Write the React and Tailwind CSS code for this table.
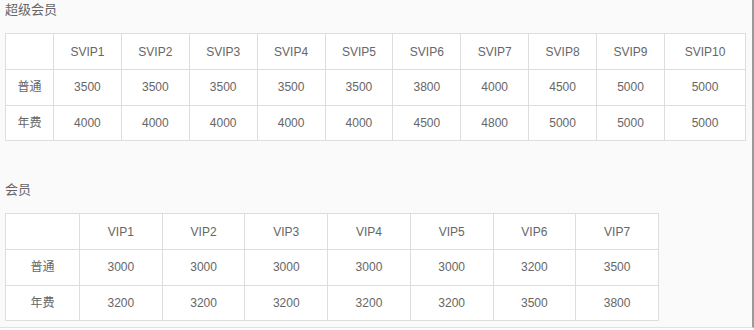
import React from "react";

const svip = {
    heads: ["SVIP1", "SVIP2", "SVIP3", "SVIP4", "SVIP5", "SVIP6", "SVIP7", "SVIP8", "SVIP9", "SVIP10"],
    rows: [
        ["普通", "3500", "3500", "3500", "3500", "3500", "3800", "4000", "4500", "5000", "5000"],
        ["年费", "4000", "4000", "4000", "4000", "4000", "4500", "4800", "5000", "5000", "5000"],
    ],
};

const vip = {
    heads: ["VIP1", "VIP2", "VIP3", "VIP4", "VIP5", "VIP6", "VIP7"],
    rows: [
        ["普通", "3000", "3000", "3000", "3000", "3000", "3200", "3500"],
        ["年费", "3200", "3200", "3200", "3200", "3200", "3500", "3800"],
    ],
};

const cell = "border border-[#dddddd] text-center align-middle p-0";

const PriceTable = ({ data, tableClass, firstCol, lastCol }) => (
    <table className={`table-fixed border-collapse bg-white ${tableClass}`}>
        <colgroup>
            <col className={firstCol} />
            {data.heads.map((h, i) => (
                <col key={h} className={i === data.heads.length - 1 ? lastCol : ""} />
            ))}
        </colgroup>
        <thead>
            <tr className="h-[36px]">
                <th className={`${cell} font-normal`}></th>
                {data.heads.map((h) => (
                    <th key={h} className={`${cell} font-normal`}>{h}</th>
                ))}
            </tr>
        </thead>
        <tbody>
            {data.rows.map((row) => (
                <tr key={row[0]} className="h-[35.5px]">
                    {row.map((v, i) => (
                        <td key={i} className={cell}>{v}</td>
                    ))}
                </tr>
            ))}
        </tbody>
    </table>
);

export default function App() {
    return (
        <div
            className="w-[754px] h-[328px] bg-[#fafafa] border-r-2 border-r-[#9a9a9a] border-b border-b-[#e2e2e2] pl-[5px] text-[12px] text-[#666666]"
            style={{ fontFamily: '"Liberation Sans", Arial, "Noto Sans CJK SC", sans-serif' }}
        >
            <h3 className="h-[20px] leading-[20px] text-[13px] text-[#666666] font-normal">超级会员</h3>
            <div className="mt-[13px]">
                <PriceTable data={svip} tableClass="w-[741px]" firstCol="w-[48px]" lastCol="w-[81px]" />
            </div>

            <h3 className="mt-[39px] h-[20px] leading-[20px] text-[13px] text-[#666666] font-normal">会员</h3>
            <div className="mt-[13px]">
                <PriceTable data={vip} tableClass="w-[654px]" firstCol="w-[74px]" lastCol="" />
            </div>
        </div>
    );
}
